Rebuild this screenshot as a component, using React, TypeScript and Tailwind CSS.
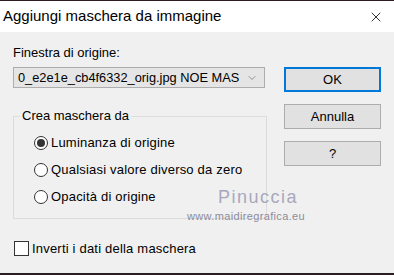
import { X, ChevronDown } from "lucide-react";

const font = { fontFamily: '"Liberation Sans", Arial, sans-serif' };

function Radio({ label, checked }: { label: string; checked?: boolean }) {
  return (
    <div className="flex h-[27px] items-center gap-[3px]">
      <span className="flex h-[14px] w-[14px] items-center justify-center rounded-full border border-[#333] bg-white">
        {checked && <span className="h-[8px] w-[8px] rounded-full bg-[#333]" />}
      </span>
      <span>{label}</span>
    </div>
  );
}

function Btn({ label, focused }: { label: string; focused?: boolean }) {
  return (
    <button
      className={`flex h-[25px] w-[97px] items-center justify-center bg-[#e1e1e1] text-[13px] text-black ${
        focused ? "border-2 border-[#0078d7]" : "border border-[#adadad]"
      }`}
    >
      {label}
    </button>
  );
}

export default function App() {
  return (
    <div
      className="flex h-[275px] w-[394px] flex-col border-t border-b-2 border-[#2b1d22] bg-[#f0f0f0] text-[13px] text-black"
      style={font}
    >
      <div className="flex h-[31px] shrink-0 items-center justify-between bg-white pl-[3px] pr-[10px]">
        <span className="text-[15px] text-black">Aggiungi maschera da immagine</span>
        <X size={16} strokeWidth={1.2} className="text-black" />
      </div>

      <div className="relative flex flex-1 pl-[13px] pr-[13px]">
        <div className="w-[254px]">
          <p className="mt-[13px] leading-[15px]">Finestra di origine:</p>
          <div className="mt-[7px] flex h-[21px] w-[252px] items-center border border-[#adadad] bg-[#e5e5e5] pl-[4px] pr-[6px]">
            <span className="flex-1 whitespace-nowrap text-[12.8px]">0_e2e1e_cb4f6332_orig.jpg NOE MAS</span>
            <ChevronDown size={12} strokeWidth={1.2} className="shrink-0 text-[#555]" />
          </div>

          <fieldset className="mt-[21px] h-[110px] w-[254px] border border-[#dcdcdc]">
            <legend className="ml-[6px] px-[2px] leading-[14px]">Crea maschera da</legend>
            <div className="mt-[6px] pl-[20px] tracking-[0.2px]">
              <Radio label="Luminanza di origine" checked />
              <Radio label="Qualsiasi valore diverso da zero" />
              <Radio label="Opacità di origine" />
            </div>
          </fieldset>

          <div className="mt-[20px] flex items-center gap-[3px] pl-[1px] tracking-[0.2px]">
            <span className="h-[15px] w-[15px] border border-[#333] bg-white" />
            <span>Inverti i dati della maschera</span>
          </div>
        </div>

        <div className="ml-auto mt-[35px] flex flex-col gap-[12px]">
          <Btn label="OK" focused />
          <Btn label="Annulla" />
          <Btn label="?" />
        </div>

        <div className="pointer-events-none absolute left-[187px] top-[156px] flex flex-col items-start leading-none">
          <span className="ml-[31px] text-[18px] font-light tracking-[1.5px] text-[#a8a8bc]">Pinuccia</span>
          <span className="mt-[5px] text-[11px] tracking-[0.35px] text-[#8c8c9c]">www.maidiregrafica.eu</span>
        </div>
      </div>
    </div>
  );
}
